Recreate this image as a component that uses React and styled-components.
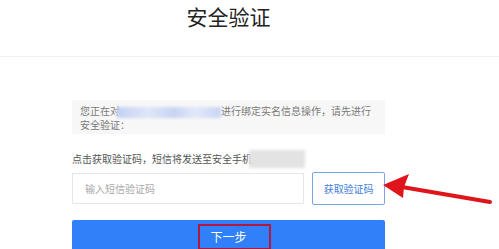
import React from "react";
import styled, { createGlobalStyle } from "styled-components";

const Global = createGlobalStyle`
  html, body { margin: 0; padding: 0; background: #fff; }
  body { font-family: "Noto Sans CJK SC", "Microsoft YaHei", sans-serif; overflow: hidden; }
`;

const Page = styled.div`
  position: relative;
  width: 499px;
  height: 249px;
  overflow: hidden;
`;

const Header = styled.header`
  height: 57px;
  border-bottom: 1px solid #f1f1f1;
  padding-left: 72px;
  box-sizing: border-box;
`;

const Title = styled.h1`
  width: 313px;
  margin: 0;
  padding-top: 3px;
  text-align: center;
  font-size: 21px;
  line-height: 26px;
  font-weight: 400;
  color: #222;
`;

const Main = styled.main`
  display: flex;
  flex-direction: column;
  padding: 43px 0 0 72px;
  width: 313px;
`;

const Notice = styled.div`
  background: #f7f7f7;
  padding: 4px 8px 2px;
  font-size: 10px;
  line-height: 14px;
  color: #7a7a7a;
  height: 28px;
`;

const Blur = styled.span`
  display: inline-block;
  vertical-align: middle;
  width: ${(p) => p.$w}px;
  height: ${(p) => p.$h}px;
  background: ${(p) => p.$bg};
  filter: blur(1.5px);
  margin-left: ${(p) => p.$ml || 0}px;
  margin-right: ${(p) => p.$mr || 0}px;
`;

const Hint = styled.div`
  margin-top: 16px;
  font-size: 10px;
  line-height: 14px;
  color: #555;
  display: flex;
  align-items: center;
`;

const Row = styled.div`
  display: flex;
  align-items: center;
  gap: 8px;
  margin-top: 4px;
`;

const Input = styled.div`
  width: 233px;
  height: 31px;
  box-sizing: border-box;
  border: 1px solid #e6e6e6;
  padding-left: 12px;
  display: flex;
  align-items: center;
  font-size: 10px;
  color: #a9a9a9;
`;

const CodeButton = styled.div`
  width: 73px;
  height: 33px;
  box-sizing: border-box;
  border: 1px solid #7ba5e6;
  border-radius: 2px;
  display: flex;
  align-items: center;
  justify-content: center;
  font-size: 10px;
  color: #3f7fdc;
`;

const NextButton = styled.div`
  position: relative;
  margin-top: 15px;
  height: 33px;
  background: #2f80f9;
  display: flex;
  align-items: center;
  justify-content: center;
  font-size: 12px;
  color: #fff;
  border-radius: 2px 2px 0 0;
`;

const Highlight = styled.div`
  position: absolute;
  left: 126px;
  top: 4px;
  width: 73px;
  height: 26px;
  box-sizing: border-box;
  border: 2px solid #b3173c;
`;

const Arrow = styled.svg`
  position: absolute;
  left: 380px;
  top: 170px;
`;

export default function App() {
  return (
    <Page>
      <Global />
      <Header>
        <Title>安全验证</Title>
      </Header>
      <Main>
        <Notice>
          <div>
            您正在对
            <Blur $w={104} $h={11} $ml={-3} $bg="linear-gradient(90deg,#c3d1f3,#dfe6f8 30%,#c7d4f3 55%,#e2e8f8 75%,#c9d5f3)" />
            进行绑定实名信息操作，请先进行
          </div>
          <div>安全验证：</div>
        </Notice>
        <Hint>
          点击获取验证码，短信将发送至安全手机
          <Blur $w={56} $h={18} $ml={-3} $bg="#e3e3e3" />
        </Hint>
        <Row>
          <Input>输入短信验证码</Input>
          <CodeButton>获取验证码</CodeButton>
        </Row>
        <NextButton>
          下一步
          <Highlight />
        </NextButton>
      </Main>
      <Arrow width="119" height="40" viewBox="0 0 119 40">
        <line x1="110" y1="32" x2="22" y2="17" stroke="#e0151c" strokeWidth="4" strokeLinecap="round" />
        <polygon points="3,15 29,4 24,17 23,28" fill="#e0151c" />
      </Arrow>
    </Page>
  );
}
